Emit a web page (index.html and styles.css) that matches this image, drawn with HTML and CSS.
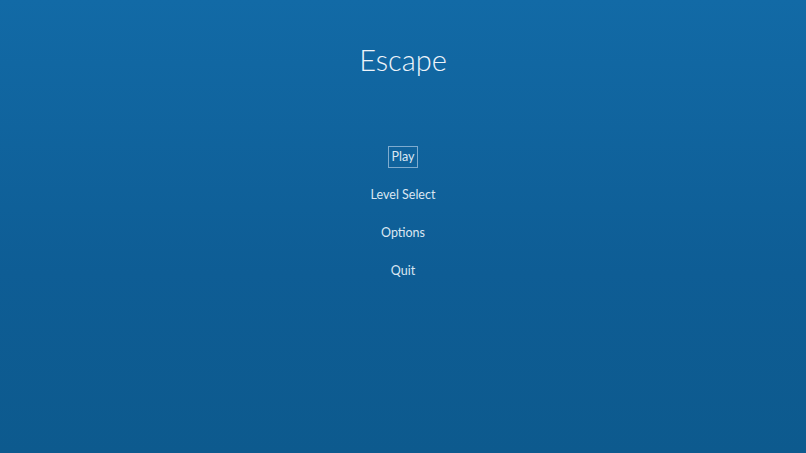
FILE: index.html
```html
<!DOCTYPE html>
<html>
<head>
<meta charset="utf-8">
<link rel="stylesheet" href="styles.css">
</head>
<body>
<div class="screen">
  <h1 class="title">Escape</h1>
  <ul class="menu">
    <li class="item selected">Play</li>
    <li class="item">Level Select</li>
    <li class="item">Options</li>
    <li class="item">Quit</li>
  </ul>
</div>
</body>
</html>
```
FILE: styles.css
```css
html, body {
  margin: 0;
  padding: 0;
  width: 100%;
  height: 100%;
}
body {
  font-family: Lato, "Open Sans", sans-serif;
  color: #e6eef6;
  background: linear-gradient(180deg, #126aa6 0%, #0e5d95 60%, #0d5a8e 100%);
  overflow: hidden;
}
.screen {
  display: flex;
  flex-direction: column;
  align-items: center;
  height: 453px;
}
.title {
  margin: 42px 0 0 0;
  font-weight: 300;
  font-size: 29px;
  line-height: 36px;
  color: #eef4fa;
}
.menu {
  list-style: none;
  margin: 68px 0 0 0;
  padding: 0;
  display: flex;
  flex-direction: column;
  align-items: center;
  gap: 16px;
}
.item {
  font-size: 12.5px;
  line-height: 20px;
  padding: 0 3px;
  border: 1px solid transparent;
  color: #dbe7f2;
}
.item.selected {
  border-color: rgba(200, 220, 240, 0.6);
}
```
